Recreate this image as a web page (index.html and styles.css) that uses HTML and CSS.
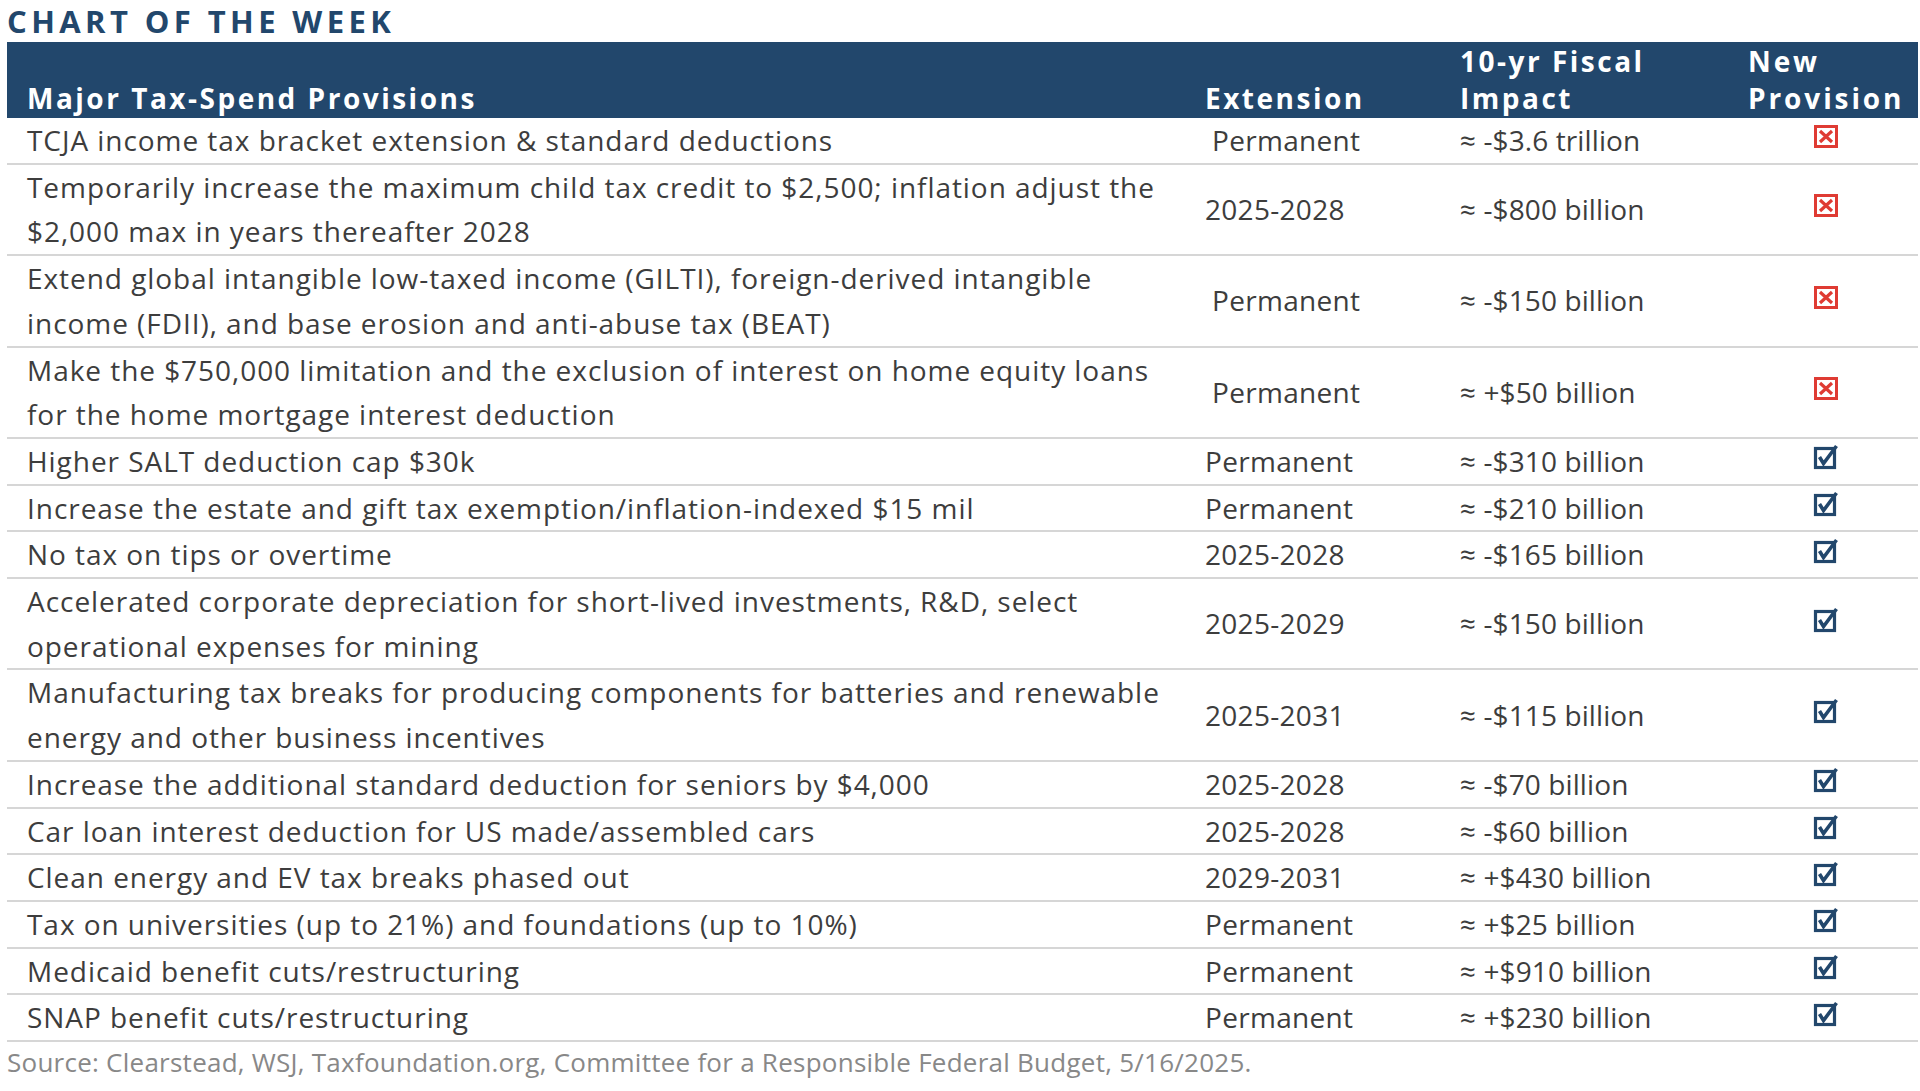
FILE: index.html
```html
<!DOCTYPE html>
<html lang="en">
<head>
<meta charset="utf-8">
<title>Chart of the Week</title>
<link rel="stylesheet" href="styles.css">
</head>
<body>
<div class="page">
  <h1 class="title">CHART OF THE WEEK</h1>
  <table class="tbl">
    <colgroup>
      <col class="c1"><col class="c2"><col class="c3"><col class="c4">
    </colgroup>
    <thead>
      <tr>
        <th class="h1">Major Tax-Spend Provisions</th>
        <th class="h2">Extension</th>
        <th class="h3">10-yr Fiscal<br>Impact</th>
        <th class="h4">New<br>Provision</th>
      </tr>
    </thead>
    <tbody>
      <tr><td class="d1">TCJA income tax bracket extension &amp; standard deductions</td><td class="d2 ind">Permanent</td><td class="d3">≈ -$3.6 trillion</td><td class="d4"><svg class="ico" viewBox="0 0 28 26"><rect x="3.5" y="3.5" width="21" height="20" class="xbox"/><path d="M8 8 L20 19 M20 8 L8 19" class="xmark"/></svg></td></tr>
      <tr><td class="d1">Temporarily increase the maximum child tax credit to $2,500; inflation adjust the<br>$2,000 max in years thereafter 2028</td><td class="d2">2025-2028</td><td class="d3">≈ -$800 billion</td><td class="d4"><svg class="ico" viewBox="0 0 28 26"><rect x="3.5" y="3.5" width="21" height="20" class="xbox"/><path d="M8 8 L20 19 M20 8 L8 19" class="xmark"/></svg></td></tr>
      <tr><td class="d1">Extend global intangible low-taxed income (GILTI), foreign-derived intangible<br>income (FDII), and base erosion and anti-abuse tax (BEAT)</td><td class="d2 ind">Permanent</td><td class="d3">≈ -$150 billion</td><td class="d4"><svg class="ico" viewBox="0 0 28 26"><rect x="3.5" y="3.5" width="21" height="20" class="xbox"/><path d="M8 8 L20 19 M20 8 L8 19" class="xmark"/></svg></td></tr>
      <tr><td class="d1">Make the $750,000 limitation and the exclusion of interest on home equity loans<br>for the home mortgage interest deduction</td><td class="d2 ind">Permanent</td><td class="d3">≈ +$50 billion</td><td class="d4"><svg class="ico" viewBox="0 0 28 26"><rect x="3.5" y="3.5" width="21" height="20" class="xbox"/><path d="M8 8 L20 19 M20 8 L8 19" class="xmark"/></svg></td></tr>
      <tr><td class="d1">Higher SALT deduction cap $30k</td><td class="d2">Permanent</td><td class="d3">≈ -$310 billion</td><td class="d4"><svg class="ico" viewBox="0 0 28 26"><rect x="3.5" y="4.5" width="19" height="19" class="cbox"/><path d="M7.5 13 L11.5 19.5 L24.5 2" class="cmark"/></svg></td></tr>
      <tr><td class="d1">Increase the estate and gift tax exemption/inflation-indexed $15 mil</td><td class="d2">Permanent</td><td class="d3">≈ -$210 billion</td><td class="d4"><svg class="ico" viewBox="0 0 28 26"><rect x="3.5" y="4.5" width="19" height="19" class="cbox"/><path d="M7.5 13 L11.5 19.5 L24.5 2" class="cmark"/></svg></td></tr>
      <tr><td class="d1">No tax on tips or overtime</td><td class="d2">2025-2028</td><td class="d3">≈ -$165 billion</td><td class="d4"><svg class="ico" viewBox="0 0 28 26"><rect x="3.5" y="4.5" width="19" height="19" class="cbox"/><path d="M7.5 13 L11.5 19.5 L24.5 2" class="cmark"/></svg></td></tr>
      <tr><td class="d1">Accelerated corporate depreciation for short-lived investments, R&amp;D, select<br>operational expenses for mining</td><td class="d2">2025-2029</td><td class="d3">≈ -$150 billion</td><td class="d4"><svg class="ico" viewBox="0 0 28 26"><rect x="3.5" y="4.5" width="19" height="19" class="cbox"/><path d="M7.5 13 L11.5 19.5 L24.5 2" class="cmark"/></svg></td></tr>
      <tr><td class="d1">Manufacturing tax breaks for producing components for batteries and renewable<br>energy and other business incentives</td><td class="d2">2025-2031</td><td class="d3">≈ -$115 billion</td><td class="d4"><svg class="ico" viewBox="0 0 28 26"><rect x="3.5" y="4.5" width="19" height="19" class="cbox"/><path d="M7.5 13 L11.5 19.5 L24.5 2" class="cmark"/></svg></td></tr>
      <tr><td class="d1">Increase the additional standard deduction for seniors by $4,000</td><td class="d2">2025-2028</td><td class="d3">≈ -$70 billion</td><td class="d4"><svg class="ico" viewBox="0 0 28 26"><rect x="3.5" y="4.5" width="19" height="19" class="cbox"/><path d="M7.5 13 L11.5 19.5 L24.5 2" class="cmark"/></svg></td></tr>
      <tr><td class="d1">Car loan interest deduction for US made/assembled cars</td><td class="d2">2025-2028</td><td class="d3">≈ -$60 billion</td><td class="d4"><svg class="ico" viewBox="0 0 28 26"><rect x="3.5" y="4.5" width="19" height="19" class="cbox"/><path d="M7.5 13 L11.5 19.5 L24.5 2" class="cmark"/></svg></td></tr>
      <tr><td class="d1">Clean energy and EV tax breaks phased out</td><td class="d2">2029-2031</td><td class="d3">≈ +$430 billion</td><td class="d4"><svg class="ico" viewBox="0 0 28 26"><rect x="3.5" y="4.5" width="19" height="19" class="cbox"/><path d="M7.5 13 L11.5 19.5 L24.5 2" class="cmark"/></svg></td></tr>
      <tr><td class="d1">Tax on universities (up to 21%) and foundations (up to 10%)</td><td class="d2">Permanent</td><td class="d3">≈ +$25 billion</td><td class="d4"><svg class="ico" viewBox="0 0 28 26"><rect x="3.5" y="4.5" width="19" height="19" class="cbox"/><path d="M7.5 13 L11.5 19.5 L24.5 2" class="cmark"/></svg></td></tr>
      <tr><td class="d1">Medicaid benefit cuts/restructuring</td><td class="d2">Permanent</td><td class="d3">≈ +$910 billion</td><td class="d4"><svg class="ico" viewBox="0 0 28 26"><rect x="3.5" y="4.5" width="19" height="19" class="cbox"/><path d="M7.5 13 L11.5 19.5 L24.5 2" class="cmark"/></svg></td></tr>
      <tr><td class="d1">SNAP benefit cuts/restructuring</td><td class="d2">Permanent</td><td class="d3">≈ +$230 billion</td><td class="d4"><svg class="ico" viewBox="0 0 28 26"><rect x="3.5" y="4.5" width="19" height="19" class="cbox"/><path d="M7.5 13 L11.5 19.5 L24.5 2" class="cmark"/></svg></td></tr>
    </tbody>
  </table>
  <p class="source">Source: Clearstead, WSJ, Taxfoundation.org, Committee for a Responsible Federal Budget, 5/16/2025.</p>
</div>
</body>
</html>
```
FILE: styles.css
```css
html, body {
  margin: 0;
  padding: 0;
  background: #ffffff;
}
.page {
  padding: 0 2px 0 7px;
  font-family: "Open Sans", "Liberation Sans", sans-serif;
}
.title {
  margin: 0;
  font-size: 31px;
  line-height: 42px;
  height: 42px;
  font-weight: 700;
  color: #22476c;
  letter-spacing: 4.4px;
  overflow: visible;
}
.tbl {
  width: 1911px;
  border-collapse: collapse;
  table-layout: fixed;
}
.c1 { width: 1191px; }
.c2 { width: 254px; }
.c3 { width: 293px; }
.c4 { width: 173px; }
.tbl th {
  background: #22476c;
  color: #ffffff;
  font-size: 28px;
  font-weight: 700;
  letter-spacing: 2.5px;
  line-height: 37px;
  text-align: left;
  vertical-align: bottom;
  padding: 0 0 1px 0;
  height: 75px;
  white-space: nowrap;
}
.tbl th.h1 { padding-left: 20px; }
.tbl th.h2 { padding-left: 7px; }
.tbl th.h3 { padding-left: 8px; }
.tbl th.h4 { padding-left: 3px; letter-spacing: 2.9px; }
.tbl td {
  font-size: 28px;
  line-height: 44.7px;
  color: #3d3d3d;
  padding: 0;
  vertical-align: middle;
  border-bottom: 2px solid #d6d6d6;
  white-space: nowrap;
}
.tbl td.d1 { padding-left: 20px; letter-spacing: 0.95px; }
.tbl td.d2 { padding-left: 7px; letter-spacing: 0.3px; }
.tbl td.d2.ind { padding-left: 14px; }
.tbl td.d3 { padding-left: 8px; letter-spacing: 0.1px; }
.tbl td.d4 {
  text-align: center;
  padding-right: 12px;
  line-height: 0;
}
.ico {
  width: 28px;
  height: 26px;
  position: relative;
  top: -4px;
}
.xbox { fill: #ffffff; stroke: #df3b33; stroke-width: 3; }
.xmark { fill: none; stroke: #df3b33; stroke-width: 3.2; }
.cbox { fill: #ffffff; stroke: #22476c; stroke-width: 3.2; }
.cmark { fill: none; stroke: #22476c; stroke-width: 3.6; stroke-linejoin: miter; }
.source {
  margin: 0;
  font-size: 26px;
  line-height: 40px;
  letter-spacing: 0.25px;
  color: #888888;
}
```
